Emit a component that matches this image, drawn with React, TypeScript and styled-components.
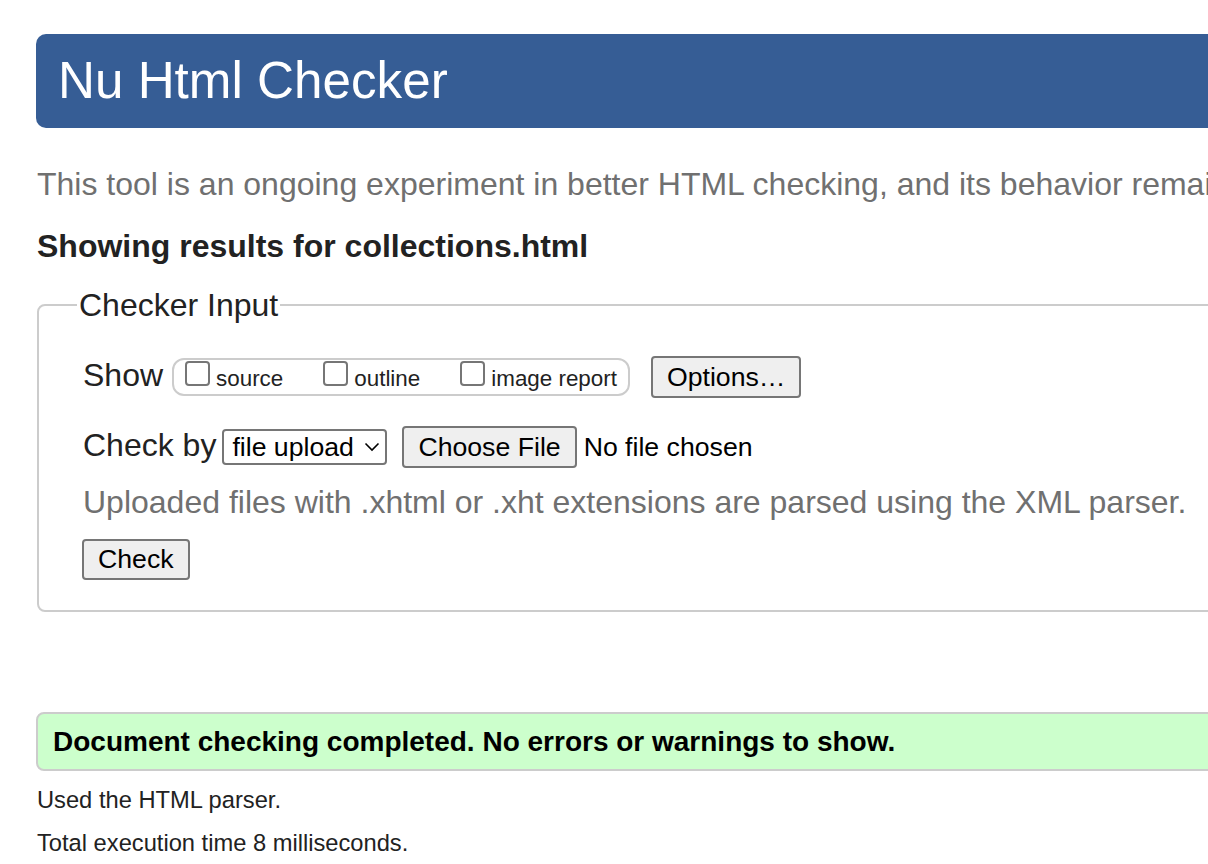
import React from 'react';
import styled, { createGlobalStyle } from 'styled-components';

const GlobalStyle = createGlobalStyle`
  html, body {
    margin: 0;
    padding: 0;
    overflow: hidden;
    background: #ffffff;
  }
  body {
    font-family: "Liberation Sans", Arial, sans-serif;
    color: #222222;
  }
`;

const Page = styled.div`
  width: 1400px;
  padding: 34px 0 0 36px;
  box-sizing: border-box;
`;

const Header = styled.header`
  height: 94px;
  background-color: #365d95;
  border-radius: 10px;
  padding-left: 22px;
  display: flex;
  align-items: center;
`;

const Title = styled.h1`
  margin: 0;
  font-size: 51.2px;
  font-weight: 400;
  line-height: 94px;
  color: #ffffff;
`;

const Intro = styled.p`
  margin: 36.7px 0 0 1px;
  font-size: 32px;
  line-height: 38.4px;
  color: #707070;
  white-space: nowrap;
`;

const ResultsHeading = styled.h2`
  margin: 23.6px 0 0 1px;
  font-size: 32px;
  line-height: 38.4px;
  font-weight: 700;
  color: #222222;
`;

const Fieldset = styled.fieldset`
  margin: 20.6px 0 0 1px;
  padding: 31.6px 0 30px 44px;
  border: 2px solid #cccccc;
  border-radius: 8px;
  min-width: 0;
`;

const Legend = styled.legend`
  margin-left: -6px;
  padding: 0 2px;
  font-size: 32px;
  line-height: 38.4px;
  color: #222222;
`;

const Row = styled.div<{ $gap?: number }>`
  display: flex;
  align-items: baseline;
  margin-top: ${p => p.$gap ?? 0}px;
`;

const Label = styled.span`
  font-size: 32px;
  line-height: 38.4px;
  color: #222222;
`;

const Pill = styled.div`
  display: inline-flex;
  align-items: baseline;
  margin-left: 9px;
  padding: 1px 11px 2.76px 11px;
  border: 2px solid #cccccc;
  border-radius: 12px;
`;

const Option = styled.label<{ $first?: boolean }>`
  display: inline-flex;
  align-items: baseline;
  margin-left: ${p => (p.$first ? 0 : 40)}px;
  font-size: 22.4px;
  line-height: 26px;
  color: #222222;
`;

const Box = styled.input`
  appearance: none;
  margin: 0 6px 0 0;
  width: 25px;
  height: 25px;
  box-sizing: border-box;
  border: 2px solid #767676;
  border-radius: 4px;
  background: #ffffff;
`;

const Button = styled.button<{ $left?: number; $height?: number }>`
  margin-left: ${p => p.$left ?? 0}px;
  height: ${p => p.$height ?? 42}px;
  padding: 0 14px;
  box-sizing: border-box;
  border: 2px solid #767676;
  border-radius: 4px;
  background: #efefef;
  font-family: "Liberation Sans", Arial, sans-serif;
  font-size: 26.67px;
  line-height: 30.67px;
  color: #000000;
`;

const SelectWrap = styled.span`
  position: relative;
  display: inline-flex;
  align-items: baseline;
  margin-left: 6px;
`;

const Select = styled.select`
  appearance: none;
  height: 36px;
  width: 165px;
  box-sizing: border-box;
  margin: 0;
  padding: 0 0 0 8px;
  border: 2px solid #767676;
  border-radius: 4px;
  background: #ffffff;
  font-family: "Liberation Sans", Arial, sans-serif;
  font-size: 26.67px;
  color: #000000;
`;

const Chevron = styled.svg`
  position: absolute;
  right: 7px;
  top: 13px;
  pointer-events: none;
`;

const FileName = styled.span`
  margin-left: 7px;
  font-size: 26.67px;
  color: #000000;
`;

const Hint = styled.p`
  margin: 14.9px 0 0 0;
  font-size: 32px;
  line-height: 38.4px;
  color: #707070;
  white-space: nowrap;
`;

const CheckRow = styled.div`
  margin-top: 17.5px;
  margin-left: -1px;
`;

const Success = styled.div`
  margin: 100px 0 0 0;
  padding: 10.7px 15px;
  border: 2px solid #cccccc;
  border-radius: 8px;
  background: #ccffcc;
  font-size: 28px;
  line-height: 33.6px;
  font-weight: 700;
  color: #000000;
`;

const Note = styled.p<{ $gap: number }>`
  margin: ${p => p.$gap}px 0 0 1px;
  font-size: 23.7px;
  line-height: 28.4px;
  color: #222222;
`;

export default function App() {
  return (
    <>
      <GlobalStyle />
      <Page>
        <Header>
          <Title>Nu Html Checker</Title>
        </Header>
        <Intro>
          This tool is an ongoing experiment in better HTML checking, and its behavior remains subject to change
        </Intro>
        <ResultsHeading>Showing results for collections.html</ResultsHeading>
        <Fieldset>
          <Legend>Checker Input</Legend>
          <Row>
            <Label>Show</Label>
            <Pill>
              <Option $first>
                <Box type="checkbox" />
                source
              </Option>
              <Option>
                <Box type="checkbox" />
                outline
              </Option>
              <Option>
                <Box type="checkbox" />
                image report
              </Option>
            </Pill>
            <Button $left={21}>Options…</Button>
          </Row>
          <Row $gap={28}>
            <Label>Check by</Label>
            <SelectWrap>
              <Select defaultValue="file">
                <option value="address">address</option>
                <option value="file">file upload</option>
                <option value="text">text input</option>
              </Select>
              <Chevron width="16" height="10" viewBox="0 0 16 10">
                <polyline points="1.5,1.5 8,8 14.5,1.5" fill="none" stroke="#000" strokeWidth="1.6" />
              </Chevron>
            </SelectWrap>
            <Button $left={15}>Choose File</Button>
            <FileName>No file chosen</FileName>
          </Row>
          <Hint>Uploaded files with .xhtml or .xht extensions are parsed using the XML parser.</Hint>
          <CheckRow>
            <Button $height={41}>Check</Button>
          </CheckRow>
        </Fieldset>
        <Success>Document checking completed. No errors or warnings to show.</Success>
        <Note $gap={15}>Used the HTML parser.</Note>
        <Note $gap={14.2}>Total execution time 8 milliseconds.</Note>
      </Page>
    </>
  );
}
